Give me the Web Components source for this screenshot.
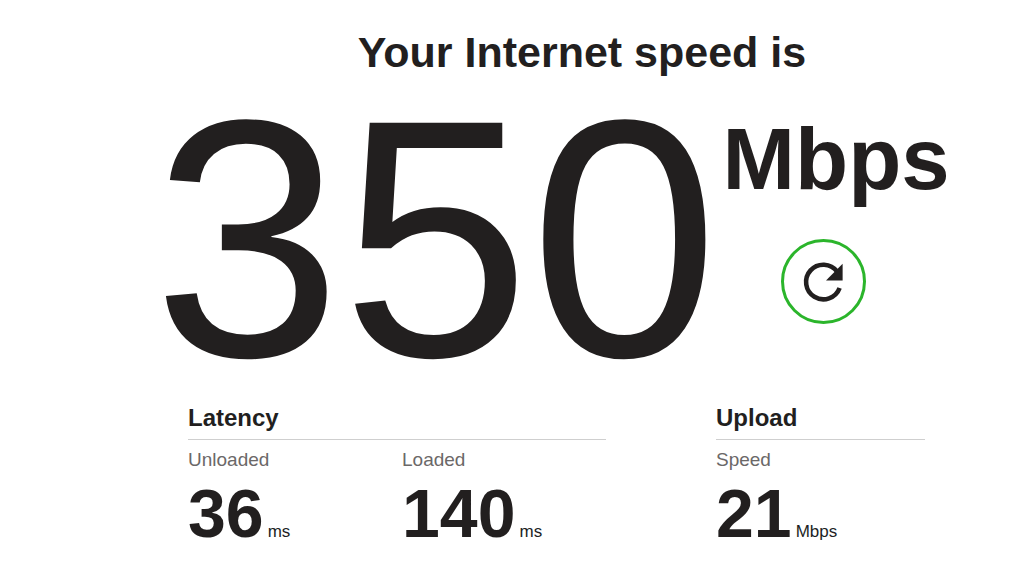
<!DOCTYPE html>
<html lang="en">
<head>
<meta charset="utf-8">
<title>Internet speed</title>
<style>
body { margin: 0; background: #fff; color: #221f1f; font-family: "Liberation Sans", Arial, sans-serif; }
</style>
</head>
<body>
<speed-page></speed-page>

<template id="page">
  <style>
    :host { display: block; }
    main { padding: 26px 79px 16px 153px; }
    h1 { margin: 0 0 33px; padding-left: 60px; text-align: center; font-size: 43px; line-height: 52px; }
    .measures { display: grid; grid-template-columns: 2fr 1fr; column-gap: 110px; padding: 0 26px 0 35px; margin-top: 37px; }
  </style>
  <main>
    <h1>Your Internet speed is</h1>
    <speed-result unit="Mbps">350</speed-result>
    <div class="measures">
      <measure-group heading="Latency">
        <measure-value label="Unloaded" unit="ms">36</measure-value>
        <measure-value label="Loaded" unit="ms">140</measure-value>
      </measure-group>
      <measure-group heading="Upload">
        <measure-value label="Speed" unit="Mbps">21</measure-value>
      </measure-group>
    </div>
  </main>
</template>

<template id="result">
  <style>
    :host { display: flex; align-items: flex-start; gap: 4px; }
    .value { font-size: 339px; line-height: 256px; }
    .side { display: flex; flex-direction: column; gap: 32px; }
    .unit { font-size: 87px; line-height: 96px; font-weight: bold; }
    refresh-button { margin-left: 58px; }
  </style>
  <div class="value"><slot></slot></div>
  <div class="side">
    <div class="unit"></div>
    <refresh-button></refresh-button>
  </div>
</template>

<template id="refresh">
  <style>
    :host { display: block; }
    button { display: flex; align-items: center; justify-content: center; box-sizing: border-box; width: 85px; height: 85px; margin: 0; padding: 0; border: 3px solid #2bb52b; border-radius: 50%; background: #fff; color: inherit; cursor: pointer; }
    svg { display: block; overflow: visible; }
  </style>
  <button type="button" aria-label="Restart speed test">
    <svg width="39" height="39" viewBox="0 0 39 39" aria-hidden="true">
      <path d="M33.2 9.6A17.3 17.3 0 1 0 35.6 26" fill="none" stroke="currentColor" stroke-width="4.6"/>
      <path d="M38.6 1.8V18.4H22z" fill="currentColor"/>
    </svg>
  </button>
</template>

<template id="group">
  <style>
    :host { display: block; }
    h2 { margin: 0 0 8px; padding-bottom: 7px; border-bottom: 1px solid #cfcfcf; font-size: 24px; line-height: 28px; }
    .values { display: grid; grid-auto-flow: column; grid-auto-columns: 1fr; column-gap: 10px; }
  </style>
  <h2></h2>
  <div class="values"><slot></slot></div>
</template>

<template id="value">
  <style>
    :host { display: block; }
    .label { color: #6b6868; font-size: 19px; line-height: 24px; margin-bottom: 7px; }
    .reading { display: flex; align-items: baseline; gap: 4px; }
    .number { font-size: 68px; line-height: 68px; font-weight: bold; }
    .unit { font-size: 17px; line-height: 20px; }
  </style>
  <div class="label"></div>
  <div class="reading"><span class="number"><slot></slot></span><span class="unit"></span></div>
</template>

<script>
class TemplateElement extends HTMLElement {
  constructor() {
    super();
    const source = document.getElementById(this.constructor.template);
    this.attachShadow({ mode: "open" }).append(source.content.cloneNode(true));
  }
  fill(selector, attribute) {
    this.shadowRoot.querySelector(selector).textContent = this.getAttribute(attribute);
  }
}
class RefreshButton extends TemplateElement { static template = "refresh"; }
class SpeedResult extends TemplateElement {
  static template = "result";
  connectedCallback() { this.fill(".unit", "unit"); }
}
class MeasureValue extends TemplateElement {
  static template = "value";
  connectedCallback() { this.fill(".label", "label"); this.fill(".unit", "unit"); }
}
class MeasureGroup extends TemplateElement {
  static template = "group";
  connectedCallback() { this.fill("h2", "heading"); }
}
class SpeedPage extends TemplateElement { static template = "page"; }
customElements.define("refresh-button", RefreshButton);
customElements.define("speed-result", SpeedResult);
customElements.define("measure-value", MeasureValue);
customElements.define("measure-group", MeasureGroup);
customElements.define("speed-page", SpeedPage);
</script>
</body>
</html>
